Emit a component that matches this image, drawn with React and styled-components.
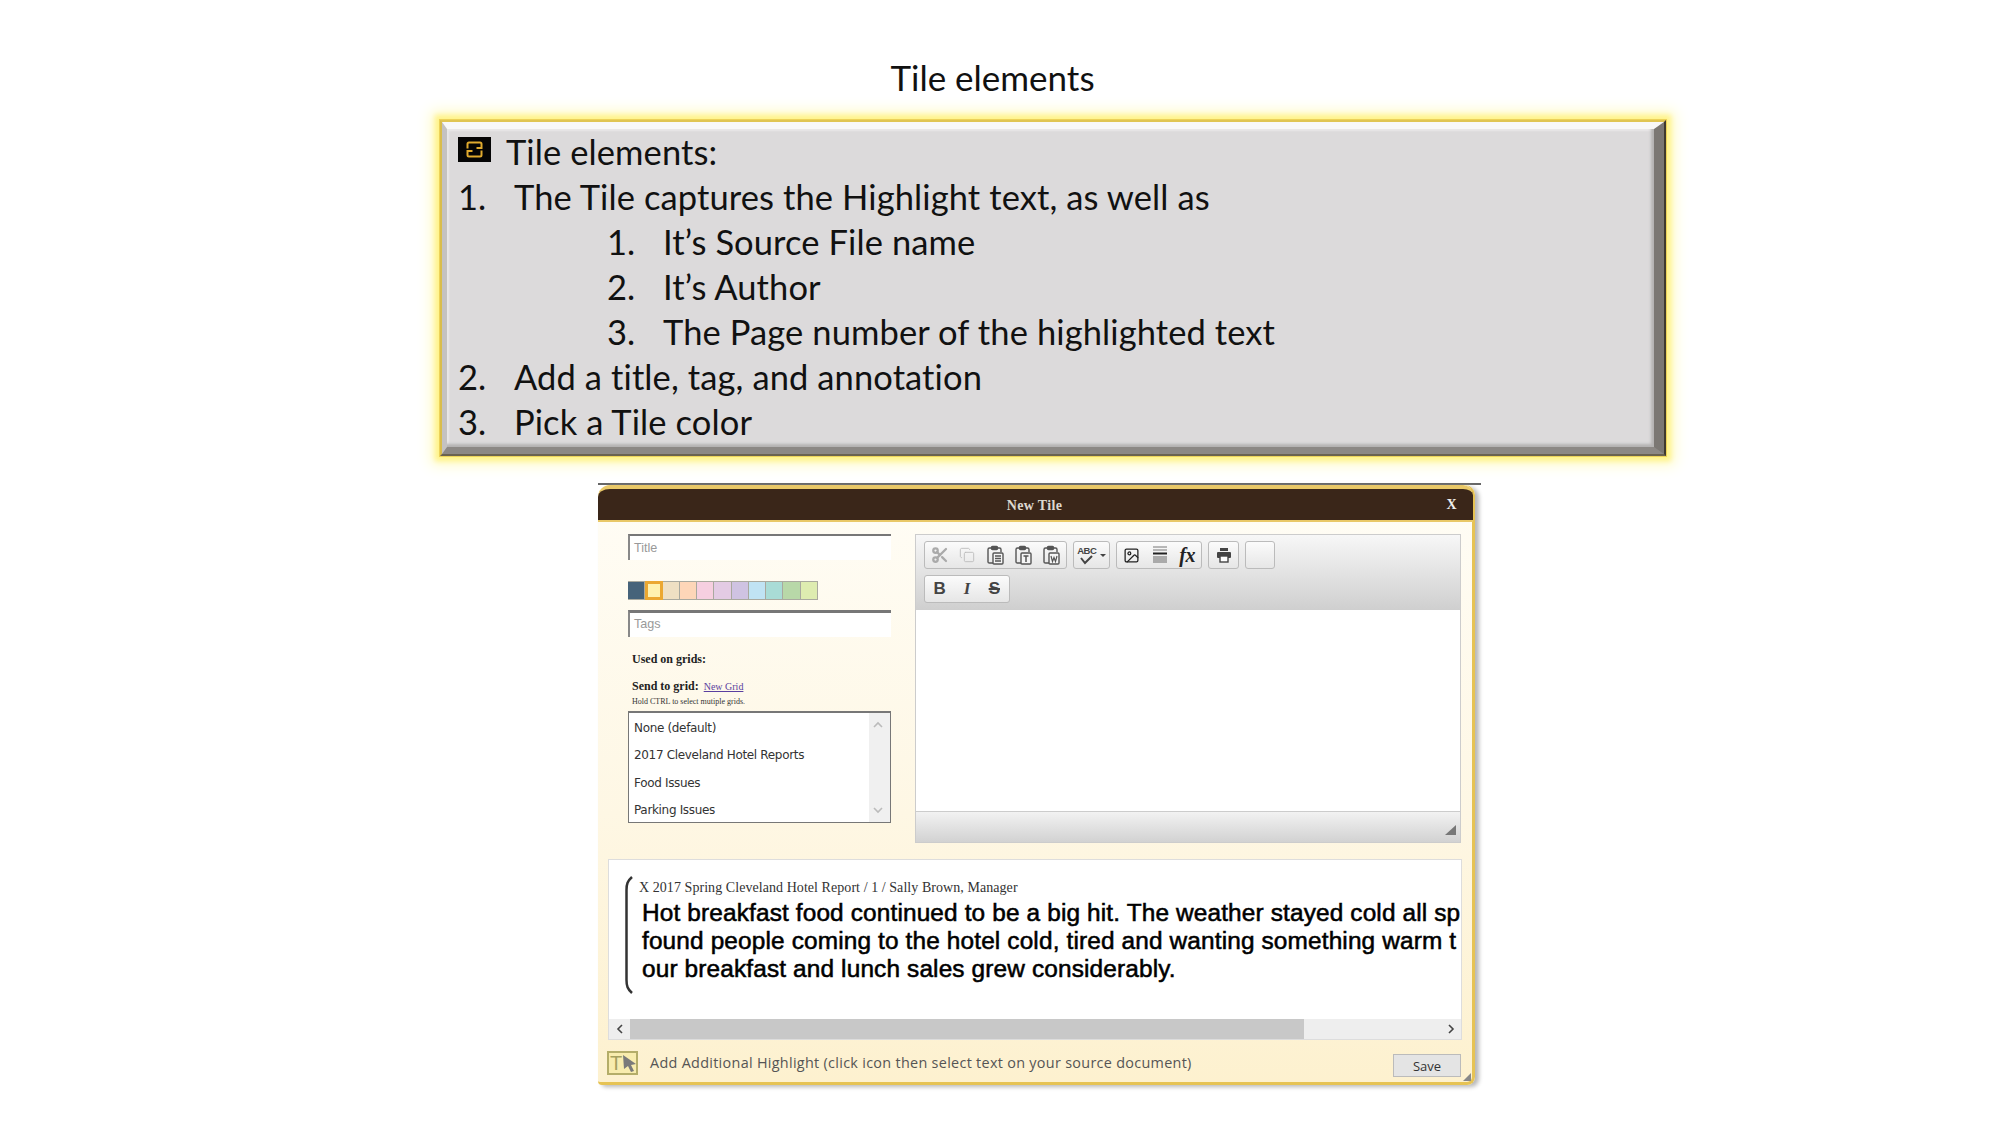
import React from "react";
import styled, { createGlobalStyle } from "styled-components";
import { Scissors, Copy, Image as ImageIcon } from "lucide-react";

const Global = createGlobalStyle`
  html, body { margin: 0; padding: 0; background: #fff; }
  * { box-sizing: border-box; }
`;

const Page = styled.div`
  width: 2000px;
  height: 1125px;
  overflow: hidden;
  background: #fff;
  display: flex;
  flex-direction: column;
`;

const Heading = styled.h1`
  margin: 0;
  height: 120px;
  padding: 55px 15px 0 0;
  text-align: center;
  font: 400 35px/44px Lato, "Open Sans", sans-serif;
  color: #111;
`;

const Callout = styled.section`
  margin-left: 440px;
  width: 1226px;
  height: 336px;
  border: 2px solid;
  border-color: #e0c552 #3f392e #6a6250 #d9bd4c;
  box-shadow:
    0 0 0 1px #ecd25a,
    0 0 5px 5px #fff38a,
    0 0 13px 9px #fffbc8;
`;

const Bevel = styled.div`
  height: 100%;
  border-style: solid;
  border-width: 7px 10px 7px 5px;
  border-color: #f8f8f8 #7b7773 #8c8885 #c4c2c1;
  background: #dcdadb;
  box-shadow: inset -3px -3px 3px #b4b2b2, inset 2px 2px 2px #e9e8e8;
  color: #111;
  font: 400 34.5px/45px Lato, "Open Sans", sans-serif;
  letter-spacing: 0.1px;
`;

const Row = styled.div`
  display: flex;
  align-items: center;
  height: 45px;
  padding-left: ${(p) => p.$indent}px;
`;

const Num = styled.span`
  width: 56px;
  flex: none;
`;

const Badge = styled.svg`
  width: 33px;
  height: 25px;
  margin: -4px 15px 0 0;
  flex: none;
`;

const Dialog = styled.section`
  margin: 27px 0 0 598px;
  width: 883px;
  border-top: 2px solid #666;
`;

const Window = styled.div`
  width: 877px;
  height: 600px;
  border-radius: 12px 10px 8px 4px;
  border-right: 3px solid #e6c354;
  border-bottom: 3px solid #e6c354;
  background: linear-gradient(#fffdf6 0%, #fef7e4 55%, #fdf1cf 100%);
  box-shadow: 4px 2px 4px #b9b9b9;
  position: relative;
  display: flex;
  flex-direction: column;
`;

const TitleBar = styled.header`
  height: 37px;
  flex: none;
  background: #3a2619;
  border-top: 4px solid #e9c868;
  border-bottom: 2px solid #e9c868;
  border-radius: 12px 10px 0 0;
  margin-right: -1px;
  padding: 2px 2px 0 0;
  display: flex;
  align-items: center;
  justify-content: center;
  position: relative;
  color: #ded8cf;
  font: 700 14px "Liberation Serif", serif;
  letter-spacing: 0.35px;
`;

const Close = styled.span`
  position: absolute;
  right: 16px;
  top: 8px;
  font: 700 14px "Liberation Serif", serif;
  color: #eee;
`;

const Body = styled.div`
  flex: 1;
  display: flex;
  flex-direction: column;
  padding: 12px 11px 0 10px;
`;

const Top = styled.div`
  display: flex;
  gap: 24px;
  padding-left: 20px;
`;

const Side = styled.div`
  width: 263px;
  flex: none;
  display: flex;
  flex-direction: column;
`;

const Field = styled.div`
  height: ${(p) => p.$h}px;
  background: #fff;
  border-top: ${(p) => p.$top}px solid #777;
  border-left: 2px solid #888;
  padding: 0 0 ${(p) => p.$lift}px 4px;
  display: flex;
  align-items: center;
  color: #999;
  font: 400 12.6px "Liberation Sans", sans-serif;
`;

const Swatches = styled.div`
  display: flex;
  margin: 21px 0 10px;
  width: 190px;
  height: 19px;
`;

const Swatch = styled.span`
  width: 17.27px;
  flex: none;
  background: ${(p) => p.$c};
  border: ${(p) => (p.$on ? "3px solid #eba832" : "1px solid #a9a99f")};
  border-left-width: ${(p) => (p.$on ? 3 : 0)}px;
`;

const SideLabel = styled.div`
  margin: ${(p) => p.$m};
  padding-left: 4px;
  height: 14px;
  font: 700 12px/14px "Liberation Serif", serif;
  color: #222;
  display: flex;
  align-items: center;
  gap: 5px;
`;

const GridLink = styled.a`
  font: 400 10px "Liberation Serif", serif;
  color: #5a3fa0;
  text-decoration: underline;
`;

const Hint = styled.div`
  padding-left: 4px;
  margin-top: 4px;
  height: 10px;
  font: 400 8px/10px "Liberation Serif", serif;
  color: #333;
`;

const ListBox = styled.div`
  margin-top: 4px;
  height: 112px;
  background: #fff;
  border: 1px solid #777;
  border-top-width: 2px;
  display: flex;
`;

const Options = styled.ul`
  flex: 1;
  list-style: none;
  margin: 0;
  padding: 2px 0 0 5px;
  font: 400 12px/27.3px "DejaVu Sans", Verdana, sans-serif;
  letter-spacing: -0.33px;
  color: #333;
`;

const ScrollTrack = styled.div`
  width: 21px;
  background: #f0f0f0;
  display: flex;
  flex-direction: column;
  justify-content: space-between;
  align-items: center;
  padding: 6px 3px 6px 0;
`;

const Editor = styled.div`
  width: 546px;
  height: 309px;
  border: 1px solid #ccc;
  display: flex;
  flex-direction: column;
  background: #fff;
`;

const Toolbar = styled.div`
  height: 75px;
  flex: none;
  background: linear-gradient(#f7f7f7, #cfcfcf);
  padding: 6px 0 0 8px;
  display: flex;
  flex-direction: column;
  gap: 6px;
`;

const ToolRow = styled.div`
  display: flex;
  gap: 6px;
`;

const Group = styled.div`
  width: ${(p) => p.$w}px;
  height: 28px;
  border: 1px solid #bbb;
  border-radius: 3px;
  background: linear-gradient(#fbfbfb, #e6e6e6);
  display: flex;
  align-items: center;
  justify-content: ${(p) => p.$justify || "space-around"};
  padding: 0 ${(p) => p.$pad ?? 3}px;
  color: ${(p) => p.$c || "#444"};
`;

const Letter = styled.span`
  width: 28px;
  text-align: center;
  color: #444;
  font: ${(p) => p.$font || '700 17px "Liberation Sans", sans-serif'};
  text-decoration: ${(p) => p.$deco || "none"};
  text-decoration-thickness: 1.5px;
`;

const Fx = styled.span`
  font: italic 700 20px "Liberation Serif", serif;
  color: #222;
  letter-spacing: -0.5px;
`;

const Abc = styled.span`
  position: relative;
  width: 22px;
  height: 20px;
  font: 700 9.5px/12px "Liberation Sans", sans-serif;
  color: #444;
  letter-spacing: -0.5px;
  display: flex;
  align-items: flex-start;
`;

const Caret = styled.i`
  width: 0;
  height: 0;
  border: 3px solid transparent;
  border-top: 3px solid #444;
  margin-top: 4px;
`;

const Canvas = styled.div`
  flex: 1;
  background: #fff;
`;

const EditorFoot = styled.div`
  height: 31px;
  flex: none;
  border-top: 1px solid #ccc;
  background: linear-gradient(#f2f2f2, #d2d2d2);
  display: flex;
  justify-content: flex-end;
  align-items: flex-end;
  padding: 0 4px 7px 0;
`;

const Highlight = styled.div`
  margin-top: 16px;
  width: 854px;
  height: 181px;
  background: #fff;
  border: 1px solid #ddd;
  display: flex;
  flex-direction: column;
`;

const Quote = styled.div`
  flex: 1;
  min-height: 0;
  display: flex;
  padding: 16px 0 0 15px;
  overflow: hidden;
`;

const Bracket = styled.svg`
  width: 12px;
  height: 118px;
  flex: none;
`;

const QuoteText = styled.div`
  min-width: 0;
  flex: 1;
  overflow: hidden;
  padding-left: 3px;
`;

const Meta = styled.div`
  height: 23px;
  font: 400 14px/24px "Liberation Serif", serif;
  color: #333;
  white-space: nowrap;
  letter-spacing: 0.06px;
`;

const Passage = styled.p`
  margin: 0;
  padding-left: 3px;
  font: 400 24.4px/28px "Liberation Sans", sans-serif;
  letter-spacing: 0.14px;
  -webkit-text-stroke: 0.55px #000;
  color: #000;
  white-space: nowrap;
`;

const HScroll = styled.div`
  height: 20px;
  flex: none;
  background: #eee;
  display: flex;
  align-items: center;
`;

const ScrollBtn = styled.span`
  width: 21px;
  height: 100%;
  flex: none;
  display: flex;
  align-items: center;
  justify-content: center;
`;

const Thumb = styled.span`
  width: 674px;
  height: 100%;
  background: #c8c8c8;
`;

const Spacer = styled.span`
  flex: 1;
`;

const Foot = styled.footer`
  height: 43px;
  display: flex;
  align-items: flex-start;
  padding-top: 11px;
  margin-left: -1px;
`;

const PickIcon = styled.div`
  width: 31px;
  height: 24px;
  border: 2px solid #b4ad69;
  background: #f8ecae;
  position: relative;
  flex: none;
  font: 400 20px/20px "Liberation Sans", sans-serif;
  color: #a59f5e;
  padding-left: 1px;
`;

const Cursor = styled.svg`
  position: absolute;
  left: 12px;
  top: 1px;
  width: 16px;
  height: 19px;
`;

const FootText = styled.span`
  margin: 4px 0 0 12px;
  font: 400 14.4px/16px "Open Sans", sans-serif;
  letter-spacing: 0.3px;
  color: #555;
  white-space: nowrap;
`;

const Save = styled.button`
  width: 68px;
  height: 23px;
  margin-top: 3px;
  background: #e4e4e4;
  border: 1px solid #bbb;
  font: 400 13px "Open Sans", sans-serif;
  color: #333;
  padding: 0;
`;

const Grip = styled.svg`
  position: absolute;
  right: 1px;
  bottom: 1px;
  width: 9px;
  height: 9px;
`;

const Clip = ({ mark }) => (
  <svg width="18" height="20" viewBox="0 0 18 20" fill="none" stroke="#555" strokeWidth="1.4">
    <path d="M5 3H3.500Q2 3 2 4.500V17q0 1 1.500 1H7" />
    <path d="M12 3h1.500Q15 3 15 4.500V7" />
    <rect x="5.500" y="1.500" width="6" height="3" rx="1" fill="#555" />
    <rect x="7" y="8" width="10" height="11" rx="1" fill="#f6f6f6" />
    {mark === "lines" && <path d="M9 11h6M9 13.500h6M9 16h6" strokeWidth="1.300" />}
    {mark === "t" && <path d="M9.500 11h5M12 11v6" strokeWidth="1.500" />}
    {mark === "w" && <path d="M9 11l1.500 5.500L12 12.500l1.500 4L15 11" strokeWidth="1.200" />}
  </svg>
);

const RuleIcon = () => (
  <svg width="16" height="18" viewBox="0 0 16 18">
    <path d="M1 1h14M1 4h14" stroke="#777" strokeWidth="1" />
    <path d="M1 7.500h14" stroke="#222" strokeWidth="2" />
    <rect x="1" y="10" width="14" height="7" fill="#aaa" />
  </svg>
);

const PrintIcon = () => (
  <svg width="16" height="16" viewBox="0 0 16 16">
    <rect x="4" y="1" width="8" height="3" fill="#444" />
    <rect x="1" y="5" width="14" height="6" rx="1" fill="#444" />
    <rect x="4" y="9" width="8" height="6" fill="#fff" stroke="#444" strokeWidth="1.400" />
  </svg>
);

const swatches = ["#46637a", "#fff2b0", "#efe0c3", "#fdd6b8", "#f6cfe0", "#e3cbe4", "#cfc3e2", "#c0e3f3", "#a9dcd6", "#b8d8a8", "#deecb0"];

const Chevron = ({ d, c = "#555" }) => (
  <svg width="12" height="12" viewBox="0 0 12 12" fill="none" stroke={c} strokeWidth="1.600">
    <path d={d} />
  </svg>
);

export default function App() {
  return (
    <Page>
      <Global />
      <Heading>Tile elements</Heading>
      <Callout>
        <Bevel>
          <Row $indent={11}>
            <Badge viewBox="0 0 33 25">
              <rect width="33" height="25" fill="#050505" />
              <path d="M9.500 11.500V7q0-1.500 1.500-1.500h11q1.500 0 1.500 1.500v4h-5M23.500 13.500V18q0 1.500-1.500 1.500H11q-1.500 0-1.500-1.500v-4h5" fill="none" stroke="#e0aa2e" strokeWidth="2" />
            </Badge>
            Tile elements:
          </Row>
          <Row $indent={11}><Num>1.</Num>The Tile captures the Highlight text, as well as</Row>
          <Row $indent={160}><Num>1.</Num>It’s Source File name</Row>
          <Row $indent={160}><Num>2.</Num>It’s Author</Row>
          <Row $indent={160}><Num>3.</Num>The Page number of the highlighted text</Row>
          <Row $indent={11}><Num>2.</Num>Add a title, tag, and annotation</Row>
          <Row $indent={11}><Num>3.</Num>Pick a Tile color</Row>
        </Bevel>
      </Callout>
      <Dialog>
        <Window>
          <TitleBar>
            New Tile
            <Close>X</Close>
          </TitleBar>
          <Body>
            <Top>
              <Side>
                <Field $h={26} $top={2} $lift={0}>Title</Field>
                <Swatches>
                  {swatches.map((c, i) => (
                    <Swatch key={c} $c={c} $on={i === 1} />
                  ))}
                </Swatches>
                <Field $h={27} $top={3} $lift={2}>Tags</Field>
                <SideLabel $m="15px 0 0">Used on grids:</SideLabel>
                <SideLabel $m="13px 0 0">
                  Send to grid: <GridLink>New Grid</GridLink>
                </SideLabel>
                <Hint>Hold CTRL to select mutiple grids.</Hint>
                <ListBox>
                  <Options>
                    <li>None (default)</li>
                    <li>2017 Cleveland Hotel Reports</li>
                    <li>Food Issues</li>
                    <li>Parking Issues</li>
                  </Options>
                  <ScrollTrack>
                    <Chevron d="M2 8l4-4 4 4" c="#bbb" />
                    <Chevron d="M2 4l4 4 4-4" c="#bbb" />
                  </ScrollTrack>
                </ListBox>
              </Side>
              <Editor>
                <Toolbar>
                  <ToolRow>
                    <Group $w={143} $c="#aaa" $justify="space-between" $pad={6}>
                      <Scissors size={18} strokeWidth={3} />
                      <Copy size={16} strokeWidth={1.300} color="#bbb" />
                      <Clip mark="lines" />
                      <Clip mark="t" />
                      <Clip mark="w" />
                    </Group>
                    <Group $w={37}>
                      <Abc>
                        ABC
                        <svg width="16" height="10" viewBox="0 0 16 10" style={{ position: "absolute", left: 2, top: 10 }}>
                          <path d="M2 3l4 5 7-7" fill="none" stroke="#444" strokeWidth="2" />
                        </svg>
                      </Abc>
                      <Caret />
                    </Group>
                    <Group $w={86} $justify="space-between" $pad={6}>
                      <ImageIcon size={17} strokeWidth={1.800} color="#222" />
                      <RuleIcon />
                      <Fx>fx</Fx>
                    </Group>
                    <Group $w={31}><PrintIcon /></Group>
                    <Group $w={30} />
                  </ToolRow>
                  <ToolRow>
                    <Group $w={86} $justify="flex-start" $pad={1}>
                      <Letter>B</Letter>
                      <Letter $font='italic 700 17px "Liberation Serif", serif'>I</Letter>
                      <Letter $deco="line-through">S</Letter>
                    </Group>
                  </ToolRow>
                </Toolbar>
                <Canvas />
                <EditorFoot>
                  <svg width="11" height="10" viewBox="0 0 11 10"><path d="M11 0v10H0z" fill="#777" /></svg>
                </EditorFoot>
              </Editor>
            </Top>
            <Highlight>
              <Quote>
                <Bracket viewBox="0 0 12 118">
                  <path d="M8 1C3.500 5 2.500 8 2.500 14v90c0 6 1 9 5.500 13" fill="none" stroke="#333" strokeWidth="2.500" />
                </Bracket>
                <QuoteText>
                  <Meta>X 2017 Spring Cleveland Hotel Report / 1 / Sally Brown, Manager</Meta>
                  <Passage>Hot breakfast food continued to be a big hit. The weather stayed cold all sp</Passage>
                  <Passage>found people coming to the hotel cold, tired and wanting something warm t</Passage>
                  <Passage>our breakfast and lunch sales grew considerably.</Passage>
                </QuoteText>
              </Quote>
              <HScroll>
                <ScrollBtn><Chevron d="M8 2L4 6l4 4" c="#444" /></ScrollBtn>
                <Thumb />
                <Spacer />
                <ScrollBtn><Chevron d="M4 2l4 4-4 4" c="#444" /></ScrollBtn>
              </HScroll>
            </Highlight>
            <Foot>
              <PickIcon>
                T
                <Cursor viewBox="0 0 16 19">
                  <path d="M2 1l13 9-5 1 3 6-3 1-3-6-4 3z" fill="#7a7a7a" />
                </Cursor>
              </PickIcon>
              <FootText>Add Additional Highlight (click icon then select text on your source document)</FootText>
              <Spacer />
              <Save>Save</Save>
            </Foot>
          </Body>
          <Grip viewBox="0 0 9 9"><path d="M9 1v8H1z" fill="#888" /></Grip>
        </Window>
      </Dialog>
    </Page>
  );
}
